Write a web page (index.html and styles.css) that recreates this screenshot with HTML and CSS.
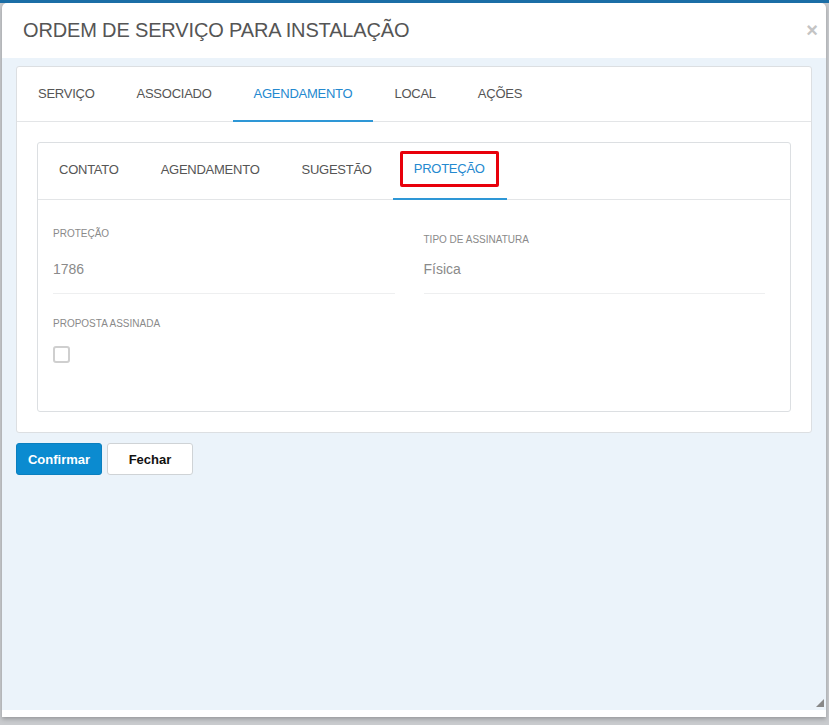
FILE: index.html
```html
<!DOCTYPE html>
<html lang="pt-BR">
<head>
    <meta charset="UTF-8">
    <title>Ordem de Serviço para Instalação</title>
    <link rel="stylesheet" href="styles.css">
</head>
<body>
    <div class="modal">
        <div class="modal-header">
            <h4 class="modal-title">ORDEM DE SERVIÇO PARA INSTALAÇÃO</h4>
            <span class="close">&times;</span>
        </div>

        <div class="modal-body">
            <div class="panel">
                <ul class="tabs">
                    <li>SERVIÇO</li>
                    <li>ASSOCIADO</li>
                    <li class="active">AGENDAMENTO</li>
                    <li>LOCAL</li>
                    <li>AÇÕES</li>
                </ul>
                <div class="panel-body">
                    <div class="panel inner">
                        <ul class="tabs">
                            <li>CONTATO</li>
                            <li>AGENDAMENTO</li>
                            <li>SUGESTÃO</li>
                            <li class="active"><span class="highlight">PROTEÇÃO</span></li>
                        </ul>
                        <div class="form">
                            <div class="field">
                                <label>PROTEÇÃO</label>
                                <div class="value">1786</div>
                            </div>
                            <div class="field shifted">
                                <label>TIPO DE ASSINATURA</label>
                                <div class="value">Física</div>
                            </div>
                            <div class="field plain">
                                <label>PROPOSTA ASSINADA</label>
                                <span class="checkbox"></span>
                            </div>
                        </div>
                    </div>
                </div>
            </div>

            <div class="actions">
                <button class="btn btn-primary">Confirmar</button>
                <button class="btn btn-default">Fechar</button>
            </div>
        </div>
        <div class="modal-footer">
            <span class="resize"></span>
        </div>
    </div>
</body>
</html>
```

FILE: styles.css
```css
html, body {
    margin: 0;
    padding: 0;
}
body {
    font-family: "Liberation Sans", Arial, sans-serif;
    background-color: #c9cbce;
    border-top: 3px solid #1b6ea6;
    height: 722px;
    overflow: hidden;
}
.modal {
    margin-left: 2px;
    width: 824px;
    height: 714px;
    background: white;
    border-radius: 5px 5px 0 0;
    display: flex;
    flex-direction: column;
    box-shadow: 0 2px 4px rgba(0, 0, 0, 0.25);
}
.modal-header {
    height: 55px;
    display: flex;
    align-items: center;
    justify-content: space-between;
    padding: 0 8px 0 21px;
}
.modal-title {
    margin: 0;
    font-size: 20px;
    font-weight: normal;
    color: #555;
    letter-spacing: -0.15px;
}
.close {
    color: #c4c4c4;
    font-size: 20px;
    font-weight: bold;
    line-height: 1;
    margin-bottom: 2px;
}
.modal-body {
    flex: 1;
    background-color: #ebf3fa;
    padding: 8px 14px 0 14px;
}
.modal-footer {
    height: 7px;
    background: white;
    position: relative;
}
.resize {
    position: absolute;
    right: 2px;
    top: -11px;
    width: 0;
    height: 0;
    border-left: 8px solid transparent;
    border-bottom: 8px solid #888;
}
.panel {
    background: white;
    border: 1px solid #dcdfe2;
    border-radius: 3px;
}
.tabs {
    list-style: none;
    margin: 0;
    padding: 0;
    display: flex;
    border-bottom: 1px solid #e3e5e7;
}
.tabs li {
    padding: 17px 21px 16px;
    font-size: 13px;
    letter-spacing: -0.25px;
    line-height: 20px;
    color: #555;
    border-bottom: 2px solid transparent;
    margin-bottom: -1px;
}
.tabs li.active {
    color: #2489cf;
    border-bottom-color: #2e97d6;
}
.panel-body {
    padding: 20px;
}
.inner .tabs li {
    padding: 17px 21px 18px;
}
.highlight {
    display: block;
    margin: -9px -13px -7px -14px;
    padding: 6px 11px 6px 11px;
    line-height: 18px;
    border: 3px solid #e8000b;
    border-radius: 2px;
}
.form {
    display: grid;
    grid-template-columns: 1fr 1fr;
    column-gap: 29px;
    padding: 28px 25px 48px 15px;
}
.field label {
    display: block;
    font-size: 10px;
    color: #8a8a8a;
    line-height: 12px;
}
.field .value {
    font-size: 14px;
    color: #8a8a8a;
    padding: 21px 0 16px;
    border-bottom: 1px solid #eeeff0;
}
.field.shifted {
    padding-top: 6px;
}
.field.shifted .value {
    padding-top: 15px;
}
.field.plain {
    grid-column: 1 / 3;
    padding-top: 24px;
}
.checkbox {
    display: block;
    width: 13px;
    height: 13px;
    margin-top: 16px;
    border: 2px solid #cfcfcf;
    border-radius: 3px;
}
.actions {
    display: flex;
    gap: 5px;
    margin: 10px 0 0 0;
}
.btn {
    font-family: "Liberation Sans", Arial, sans-serif;
    font-size: 13px;
    font-weight: bold;
    height: 32px;
    width: 86px;
    padding: 0;
    border-radius: 3px;
    cursor: pointer;
}
.btn-primary {
    background-color: #0b8bd0;
    border: 1px solid #0a7fbf;
    color: white;
}
.btn-default {
    background: white;
    border: 1px solid #cfd3d6;
    color: #111;
}
```
